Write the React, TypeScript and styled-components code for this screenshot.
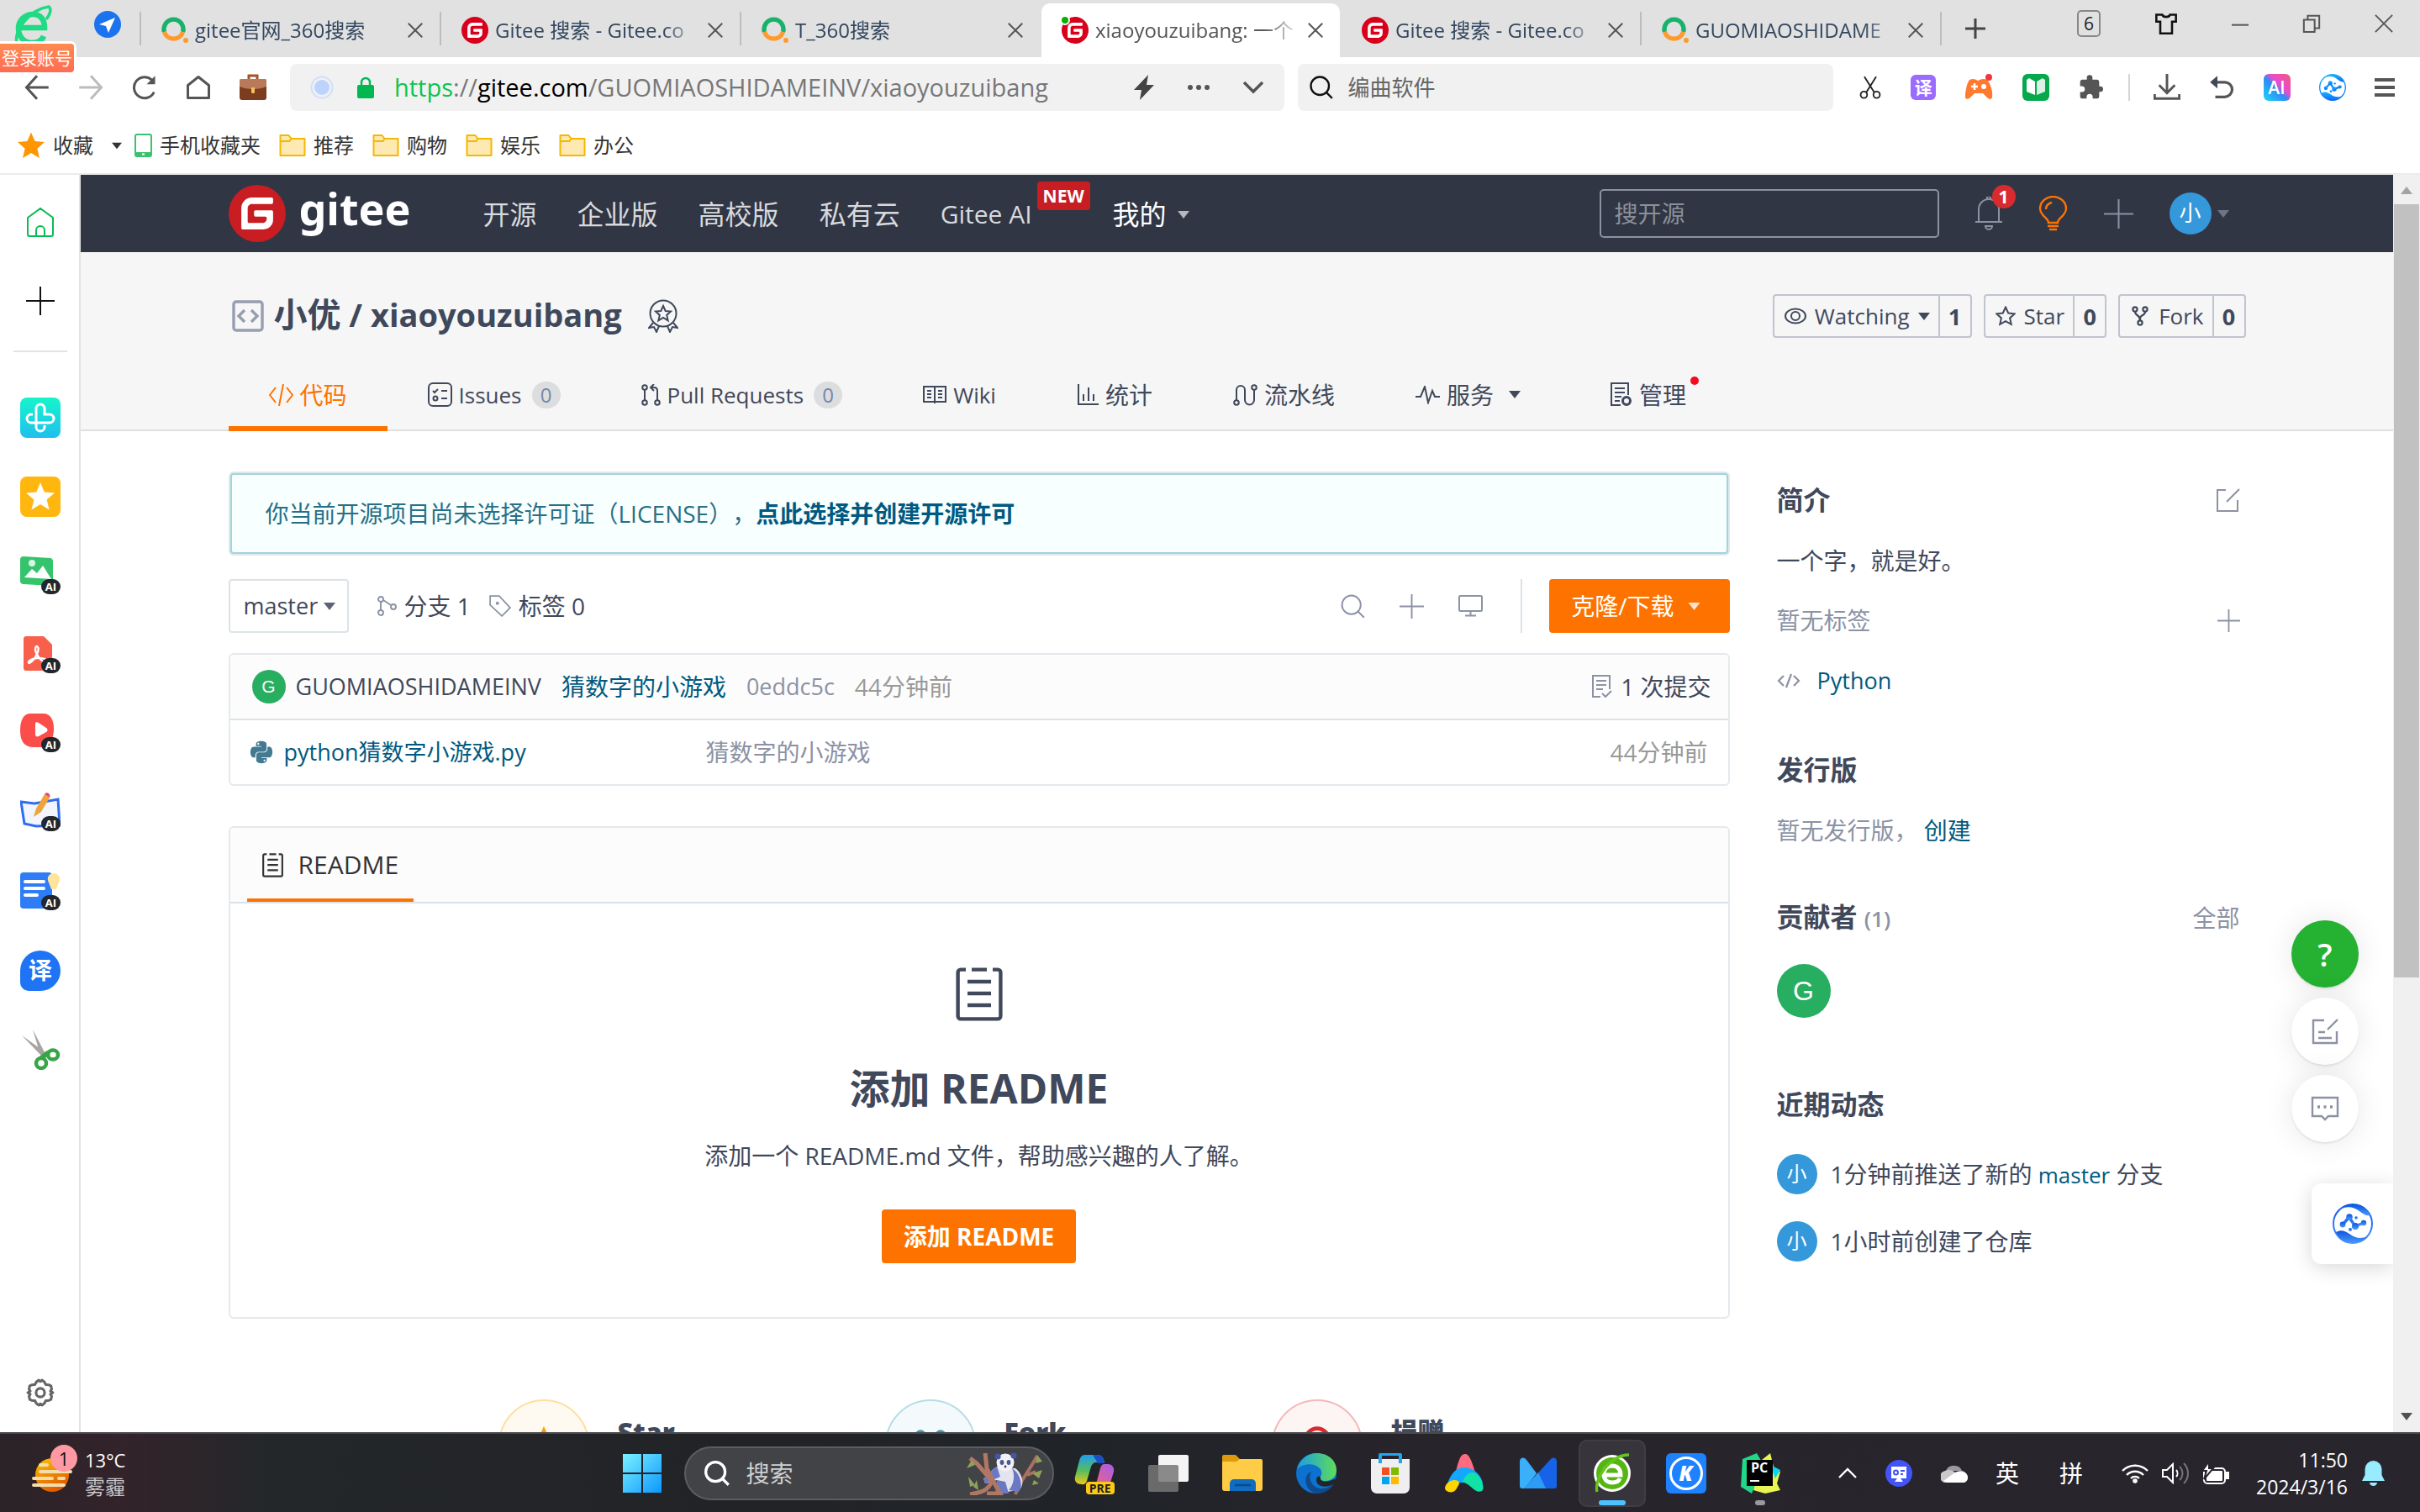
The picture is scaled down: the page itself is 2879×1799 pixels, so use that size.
import React from "react";
import styled, { createGlobalStyle, css } from "styled-components";
import { FaPython } from "react-icons/fa";

const ink = "#40485b";
const muted = "#8c92a4";
const link = "#005980";
const orange = "#fe7300";
const line = "#e3e9ed";
const chrome = "#555555";

const Global = createGlobalStyle`
  *, *::before, *::after { box-sizing: border-box; }
  body { margin: 0; background: #fff; }
  body, button, input, select {
    font-family: "Open Sans", "Noto Sans CJK SC", sans-serif;
    font-size: 28px;
    line-height: 40px;
    color: ${ink};
  }
  button, input, select { border: 0; background: none; padding: 0; margin: 0; outline: 0; }
  a { color: inherit; text-decoration: none; }
  h1, h2, h3, p { margin: 0; }
`;

/* ---------- shared pieces ---------- */

const Drawing = styled.svg<{ $w: number; $h?: number }>`
  width: ${(p) => p.$w}px;
  height: ${(p) => p.$h ?? p.$w}px;
  flex: none;
  display: block;
`;

type IconProps = {
  w: number;
  h?: number;
  box?: string;
  color?: string;
  stroke?: number;
  children: React.ReactNode;
};

const Stroke = ({ w, h, box = "0 0 24 24", color = "currentColor", stroke = 2, children }: IconProps) => (
  <Drawing $w={w} $h={h} viewBox={box} fill="none" stroke={color} strokeWidth={stroke} aria-hidden="true">
    {children}
  </Drawing>
);

const Fill = ({ w, h, box = "0 0 24 24", color = "currentColor", children }: IconProps) => (
  <Drawing $w={w} $h={h} viewBox={box} fill={color} aria-hidden="true">
    {children}
  </Drawing>
);

const Caret = ({ color = ink, w = 14 }: { color?: string; w?: number }) => (
  <Fill w={w} h={9} box="0 0 14 9" color={color}>
    <path d="M0 0h14L7 9z" />
  </Fill>
);

const IconButton = styled.button`
  display: flex;
  align-items: center;
  justify-content: center;
  color: ${chrome};
  flex: none;
`;

const GiteeMark = ({ size, color = "#d9001b" }: { size: number; color?: string }) => (
  <Fill w={size} color={color}>
    <circle cx="12" cy="12" r="11.5" fill="#fff" />
    <path d="M11.984 0A12 12 0 0 0 0 12a12 12 0 0 0 12 12 12 12 0 0 0 12-12A12 12 0 0 0 12 0a12 12 0 0 0-.016 0zm6.09 5.333c.328 0 .593.266.592.593v1.482a.594.594 0 0 1-.593.592H9.777c-.982 0-1.778.796-1.778 1.778v5.63c0 .327.266.592.593.592h5.63c.982 0 1.778-.796 1.778-1.778v-.296a.593.593 0 0 0-.592-.593h-4.15a.592.592 0 0 1-.592-.592v-1.482a.593.593 0 0 1 .593-.592h6.815c.327 0 .593.265.593.592v3.408a4 4 0 0 1-4 4H5.926a.593.593 0 0 1-.593-.593V9.778a4.444 4.444 0 0 1 4.445-4.444h8.296Z" />
  </Fill>
);

const SoMark = () => (
  <Drawing $w={32} viewBox="0 0 32 32" fill="none" aria-hidden="true">
    <path d="M3.5 18a11.5 11.5 0 1 1 22 0" stroke="#19b26b" strokeWidth="5.4" />
    <path d="M3.5 18a11.5 11.5 0 0 0 22 0" stroke="#ff9a2e" strokeWidth="5.4" />
    <circle cx="29" cy="28" r="3" fill="#ff9a2e" />
  </Drawing>
);

const SwirlMark = ({ size, id }: { size: number; id: string }) => (
  <Drawing $w={size} viewBox="0 0 48 48" fill="none" aria-hidden="true">
    <defs>
      <linearGradient id={id} x1="0" y1="0" x2="0" y2="1">
        <stop offset="0" stopColor={id === "swirlTop" ? "#16b4ff" : "#0a56dd"} />
        <stop offset="1" stopColor={id === "swirlTop" ? "#0f6bf5" : "#4b97ff"} />
      </linearGradient>
    </defs>
    <circle cx="24" cy="24" r="23" stroke={`url(#${id})`} strokeWidth="2" />
    <path d="M7 8C18 2 24 4 32 9c5 4 8 6 13 5C41 5 33 1 24 1 16 1 11 4 7 8z" fill={`url(#${id})`} />
    <path d="M4 34c6-3 10-2 16 2 8 6 14 6 22 3-5 6-11 8-18 8-9 0-16-4-20-13z" fill={`url(#${id})`} />
    <path d="M12 25l8-9M20 17l7 10 10-4" stroke={`url(#${id})`} strokeWidth="3.4" strokeLinecap="round" />
    <g fill={`url(#${id})`}>
      <circle cx="12" cy="25" r="3.4" />
      <circle cx="20" cy="16" r="3.8" />
      <circle cx="27" cy="27" r="4" />
      <circle cx="37" cy="23" r="3.2" />
      <circle cx="21" cy="31" r="2" />
      <circle cx="28" cy="17" r="1.8" />
    </g>
  </Drawing>
);

const Plus = ({ w, color, stroke = 1.4 }: { w: number; color?: string; stroke?: number }) => (
  <Stroke w={w} color={color} stroke={stroke}>
    <path d="M12 0v24M0 12h24" />
  </Stroke>
);

const Magnifier = ({ w, color, stroke = 1.8 }: { w: number; color?: string; stroke?: number }) => (
  <Stroke w={w} color={color} stroke={stroke}>
    <circle cx="10.5" cy="10.5" r="9.2" />
    <path d="M17 17l6 6" />
  </Stroke>
);

/* ---------- browser: tabs ---------- */

const Shell = styled.div`
  height: 100vh;
  display: flex;
  flex-direction: column;
  overflow: hidden;
`;

const TabStrip = styled.div`
  height: 68px;
  flex: none;
  display: flex;
  align-items: center;
  background: #e1e1e1;
`;

const Account = styled.div`
  position: relative;
  width: 166px;
  height: 68px;
  flex: none;
  padding: 8px 22px 18px 16px;
  display: flex;
  justify-content: space-between;
  align-items: center;
`;

const LoginBadge = styled.button`
  position: absolute;
  left: 0;
  top: 52px;
  z-index: 2;
  padding: 0 2px;
  border-radius: 0 4px 4px 0;
  box-shadow: 0 0 0 3px #fff;
  background: linear-gradient(#ff8a50, #ff6b52);
  color: #fff;
  font-size: 21px;
  line-height: 34px;
`;

const TabDivider = styled.span<{ $hidden?: boolean }>`
  width: 2px;
  height: 40px;
  flex: none;
  background: ${(p) => (p.$hidden ? "transparent" : "#bdbdbd")};
`;

const Tab = styled.div<{ $active?: boolean }>`
  flex: 0 1 355px;
  min-width: 0;
  height: 64px;
  align-self: flex-end;
  padding: 0 20px 0 24px;
  display: flex;
  align-items: center;
  gap: 8px;
  ${(p) =>
    p.$active &&
    css`
      background: #fff;
      border-radius: 10px 10px 0 0;
    `}
`;

const TabTitle = styled.span<{ $active?: boolean }>`
  flex: 1;
  min-width: 0;
  white-space: nowrap;
  font-size: 24px;
  line-height: 36px;
  color: ${(p) => (p.$active ? "#555" : "#33475f")};
  mask-image: linear-gradient(to right, #000 82%, transparent);
`;

const NewTab = styled(IconButton)`
  padding: 0 28px;
`;

const WindowControls = styled.div`
  margin-left: auto;
  height: 56px;
  align-self: flex-start;
  display: flex;
  align-items: center;
  gap: 64px;
  padding-right: 32px;
`;

const WindowCount = styled.span`
  width: 28px;
  border: 2px solid #888;
  border-radius: 5px;
  font-size: 21px;
  line-height: 28px;
  text-align: center;
  color: #222;
`;

const browserTabs = [
  { icon: "so", title: "gitee官网_360搜索" },
  { icon: "gitee", title: "Gitee 搜索 - Gitee.co" },
  { icon: "so", title: "T_360搜索" },
  { icon: "gitee", title: "xiaoyouzuibang: 一个", active: true },
  { icon: "gitee", title: "Gitee 搜索 - Gitee.co" },
  { icon: "so", title: "GUOMIAOSHIDAME" },
];

const FavWrap = styled.span`
  position: relative;
  flex: none;
`;

const LiveDot = styled.span`
  position: absolute;
  left: -2px;
  top: -2px;
  width: 12px;
  height: 12px;
  border-radius: 50%;
  background: #0cb000;
  border: 2px solid #fff;
`;

const BrowserTabs = () => (
  <TabStrip>
    <Account>
      <Drawing $w={46} viewBox="0 0 46 46" fill="none" aria-hidden="true">
        <path d="M7 27h30c0-10-5-16-14-16S6 18 6 28s7 17 16 17c7 0 12-3 14-8" stroke="#1fdb83" strokeWidth="6.6" />
        <path d="M4 45C0 30 20 5 42 2c4 3 1 10-3 15" stroke="#1fdb83" strokeWidth="3.6" />
      </Drawing>
      <Drawing $w={32} viewBox="0 0 32 32" aria-hidden="true">
        <circle cx="16" cy="16" r="16" fill="#1b74ee" />
        <path d="M25 8L6 16l8 2 3 8z" fill="#fff" />
      </Drawing>
      <LoginBadge>登录账号</LoginBadge>
    </Account>
    <TabDivider />
    {browserTabs.map((t, i) => (
      <React.Fragment key={i}>
        <Tab $active={t.active}>
          <FavWrap>
            {t.icon === "so" ? <SoMark /> : <GiteeMark size={32} />}
            {t.active && <LiveDot />}
          </FavWrap>
          <TabTitle $active={t.active}>{t.title}</TabTitle>
          <IconButton aria-label="关闭标签">
            <Stroke w={18} stroke={2.6}>
              <path d="M1 1l22 22M23 1L1 23" />
            </Stroke>
          </IconButton>
        </Tab>
        <TabDivider $hidden={i === 2 || i === 3} />
      </React.Fragment>
    ))}
    <NewTab aria-label="新建标签">
      <Plus w={24} color="#444" stroke={3} />
    </NewTab>
    <WindowControls>
      <WindowCount>6</WindowCount>
      <Stroke w={28} color="#111" stroke={2.2}>
        <path d="M2 3h6c1 3 7 3 8 0h6v7h-4v12H6V10H2z" />
      </Stroke>
      <IconButton aria-label="最小化">
        <Stroke w={20} color="#555" stroke={2.4}>
          <path d="M0 14h24" />
        </Stroke>
      </IconButton>
      <IconButton aria-label="还原">
        <Stroke w={22} color="#555" stroke={2.2}>
          <path d="M2 7h14v16H2zM7 7V2h15v16h-6" />
        </Stroke>
      </IconButton>
      <IconButton aria-label="关闭">
        <Stroke w={22} color="#555" stroke={2}>
          <path d="M1 1l22 22M23 1L1 23" />
        </Stroke>
      </IconButton>
    </WindowControls>
  </TabStrip>
);

/* ---------- browser: address row ---------- */

const AddressRow = styled.div`
  height: 72px;
  flex: none;
  display: flex;
  align-items: center;
  padding: 0 30px 0 29px;
`;

const NavButtons = styled.div`
  width: 316px;
  flex: none;
  display: flex;
  align-items: center;
  gap: 34px;
`;

const AddressField = styled.div`
  flex: 1184 1 0;
  min-width: 0;
  height: 56px;
  display: flex;
  align-items: center;
  border-radius: 8px;
  background: #f1f1f1;
  padding: 0 24px;
`;

const FieldIcons = styled.div`
  width: 100px;
  flex: none;
  display: flex;
  align-items: center;
  gap: 28px;
`;

const Url = styled.div`
  flex: 1;
  min-width: 0;
  overflow: hidden;
  white-space: nowrap;
  font-size: 29px;
  color: #777;
  outline: 0;

  i { font-style: normal; color: #0cc44f; }
  b { font-weight: 400; color: #000; }
`;

const FieldActions = styled.div`
  display: flex;
  align-items: center;
  gap: 38px;
`;

const SearchField = styled.label`
  flex: 636 1 0;
  margin-left: 16px;
  height: 56px;
  display: flex;
  align-items: center;
  gap: 18px;
  padding: 0 14px;
  border-radius: 8px;
  background: #f1f1f1;
  color: #111;
`;

const SearchInput = styled.input`
  flex: 1;
  min-width: 0;
  font-size: 26px;

  &::placeholder { color: #666; opacity: 1; }
`;

const Extensions = styled.div`
  margin-left: 30px;
  display: flex;
  align-items: center;
  justify-content: space-between;
  width: 638px;
  flex: none;
`;

const Divider = styled.span`
  width: 2px;
  height: 32px;
  margin: 0 -6px;
  background: #d5d5d5;
`;

const TileIcon = styled.span<{ $bg: string; $size?: number }>`
  width: ${(p) => p.$size ?? 32}px;
  height: ${(p) => p.$size ?? 32}px;
  flex: none;
  border-radius: 6px;
  background: ${(p) => p.$bg};
  color: #fff;
  display: flex;
  align-items: center;
  justify-content: center;
  font-size: 21px;
  font-weight: 600;
  line-height: 28px;
`;

const AddressBar = () => (
  <AddressRow>
    <NavButtons>
      <IconButton aria-label="后退">
        <Stroke w={30} stroke={2.4}>
          <path d="M23 12H2M12 1L2 12l10 11" />
        </Stroke>
      </IconButton>
      <IconButton aria-label="前进">
        <Stroke w={30} color="#bcbcbc" stroke={2.4}>
          <path d="M1 12h21M12 1l10 11-10 11" />
        </Stroke>
      </IconButton>
      <IconButton aria-label="刷新">
        <Stroke w={30} stroke={2.4}>
          <path d="M21 16.500A10 10 0 1 1 19 5" />
          <path d="M22 1v8h-8z" fill="currentColor" stroke="none" />
        </Stroke>
      </IconButton>
      <IconButton aria-label="主页">
        <Stroke w={30} stroke={2.4}>
          <path d="M2 10l10-8 10 8v12H2z" strokeLinejoin="round" />
        </Stroke>
      </IconButton>
      <Drawing $w={32} viewBox="0 0 32 32" aria-hidden="true">
        <path d="M11 6V2h10v4" fill="none" stroke="#a5532b" strokeWidth="3" />
        <rect y="6" width="32" height="25" rx="3" fill="#7c3c1e" />
        <path d="M0 8c0-2 1-2 3-2h26c2 0 3 0 3 2v7c-9 4-23 4-32 0z" fill="#b97a5a" />
        <rect x="14" y="16" width="4" height="7" rx="1" fill="#f0c25a" />
      </Drawing>
    </NavButtons>
    <AddressField>
      <FieldIcons>
        <Drawing $w={28} viewBox="0 0 28 28" fill="none" aria-hidden="true">
          <circle cx="14" cy="14" r="12.500" stroke="#cfdffb" strokeWidth="2" />
          <circle cx="14" cy="14" r="9" fill="#bcd3fd" />
        </Drawing>
        <Drawing $w={20} $h={26} viewBox="0 0 20 26" fill="none" aria-hidden="true">
          <path d="M5 11V7a5 5 0 0 1 10 0v4" stroke="#00b84f" strokeWidth="2.400" />
          <rect y="10" width="20" height="16" rx="2" fill="#00b84f" />
        </Drawing>
      </FieldIcons>
      <Url role="textbox" aria-label="地址栏">
        <i>https</i>://<b>gitee.com</b>/GUOMIAOSHIDAMEINV/xiaoyouzuibang
      </Url>
      <FieldActions>
        <Fill w={26} h={30} box="0 0 26 30" color="#444">
          <path d="M18 0L1 18h9L8 30l17-18h-9z" />
        </Fill>
        <Fill w={28} h={8} box="0 0 28 8" color={chrome}>
          <circle cx="4" cy="4" r="3" />
          <circle cx="14" cy="4" r="3" />
          <circle cx="24" cy="4" r="3" />
        </Fill>
        <Stroke w={26} h={16} box="0 0 26 16" color={chrome} stroke={3.4}>
          <path d="M2 2l11 11L24 2" />
        </Stroke>
      </FieldActions>
    </AddressField>
    <SearchField>
      <Magnifier w={28} stroke={2} />
      <SearchInput placeholder="编曲软件" aria-label="编曲软件" />
    </SearchField>
    <Extensions>
      <Stroke w={28} color="#222" stroke={1.6}>
        <path d="M6 1l10 16M18 1L8 17" />
        <circle cx="5.500" cy="19.500" r="3.300" />
        <circle cx="18.500" cy="19.500" r="3.300" />
      </Stroke>
      <TileIcon $bg="#9a6bff" $size={30}>译</TileIcon>
      <Drawing $w={34} viewBox="0 0 34 34" aria-hidden="true">
        <path d="M6 8c4-2 7-1 10 1 4-2 8-3 12 0 4 6 6 14 5 20-1 3-4 2-6 0l-5-5H12l-5 5c-2 2-6 3-6-1C1 21 3 12 6 8z" fill="#ff7a2e" />
        <path d="M8 16h8M12 12v8" stroke="#fff" strokeWidth="2.500" />
        <circle cx="23" cy="16" r="3" fill="#fff" />
        <circle cx="29" cy="5" r="4" fill="#f4353f" />
      </Drawing>
      <TileIcon $bg="#05a94c">
        <Fill w={24} color="#fff">
          <path d="M1 3l3-2 7 4v16l-10-4z" />
          <path d="M23 3l-3-2-7 4v16l10-4z" opacity=".85" />
        </Fill>
      </TileIcon>
      <Fill w={32} color={chrome}>
        <path d="M20 11h-1V7c0-1.100-.9-2-2-2h-4V3.500a2.500 2.500 0 0 0-5 0V5H4c-1.100 0-2 .9-2 2v3.800h1.500a2.700 2.700 0 0 1 0 5.400H2V20c0 1.100.9 2 2 2h3.800v-1.500a2.700 2.700 0 0 1 5.400 0V22H17c1.100 0 2-.9 2-2v-4h1a2.500 2.500 0 0 0 0-5z" />
      </Fill>
      <Divider />
      <Stroke w={32} color={chrome} stroke={2.2}>
        <path d="M12 0v17M5 10l7 7 7-7M1 18v4h22v-4" />
      </Stroke>
      <Stroke w={30} color={chrome} stroke={2.6}>
        <path d="M3 7h12a7 7 0 0 1 0 14H6" />
        <path d="M8 1v12L1 7z" fill="currentColor" stroke="none" />
      </Stroke>
      <TileIcon $bg="linear-gradient(45deg, #19d8f5, #2f8cf7 45%, #e94bd0 60%, #f05a7a)">AI</TileIcon>
      <SwirlMark size={32} id="swirlTop" />
      <IconButton aria-label="菜单">
        <Stroke w={24} stroke={4}>
          <path d="M0 3h24M0 12h24M0 21h24" />
        </Stroke>
      </IconButton>
    </Extensions>
  </AddressRow>
);

/* ---------- browser: bookmarks ---------- */

const BookmarkRow = styled.nav`
  height: 68px;
  flex: none;
  display: flex;
  align-items: center;
  gap: 15px;
  padding-left: 20px;
  border-bottom: 2px solid #ececec;
`;

const Bookmark = styled.a`
  display: flex;
  align-items: center;
  gap: 9px;
  margin-right: 7px;
  font-size: 24px;
  line-height: 36px;
  color: #333;
`;

const Folder = () => (
  <Drawing $w={32} $h={28} viewBox="0 0 31 28" aria-hidden="true">
    <path d="M1 26V2h10l3 4h16v20z" fill="#ffe9b3" stroke="#f5b800" strokeWidth="2" strokeLinejoin="round" />
    <path d="M1 9h11l2-3" stroke="#f5b800" strokeWidth="2" fill="none" />
  </Drawing>
);

const Bookmarks = () => (
  <BookmarkRow aria-label="收藏栏">
    <Bookmark href="#">
      <Fill w={34} color="#ff9500">
        <path d="M12 1l3.200 7.500 8.100.7-6.100 5.400 1.800 8L12 18.400 5 22.600l1.800-8L.7 9.200l8.100-.7z" />
      </Fill>
      收藏
    </Bookmark>
    <Fill w={12} h={9} box="0 0 14 9" color="#333">
      <path d="M0 0h14L7 9z" />
    </Fill>
    <Bookmark href="#">
      <Drawing $w={21} $h={28} viewBox="0 0 21 28" aria-hidden="true">
        <rect x="1" y="1" width="19" height="26" rx="2" fill="#fff" stroke="#3cc26e" strokeWidth="2" />
        <path d="M1 22h19v5H1z" fill="#3cc26e" />
        <path d="M9 24.500h3" stroke="#fff" strokeWidth="2" />
      </Drawing>
      手机收藏夹
    </Bookmark>
    {["推荐", "购物", "娱乐", "办公"].map((name) => (
      <Bookmark href="#" key={name}>
        <Folder />
        {name}
      </Bookmark>
    ))}
  </BookmarkRow>
);

/* ---------- browser: side rail ---------- */

const Body = styled.div`
  flex: 1;
  min-height: 0;
  display: flex;
`;

const Rail = styled.aside`
  width: 96px;
  flex: none;
  border-right: 2px solid #e3e3e3;
  padding: 9px 0 0 2px;
  display: flex;
  flex-direction: column;
`;

const RailItem = styled.button<{ $last?: boolean }>`
  height: 94px;
  flex: none;
  display: flex;
  align-items: center;
  justify-content: center;
  margin-top: ${(p) => (p.$last ? "auto" : "0")};
`;

const RailRule = styled.hr`
  width: 64px;
  height: 2px;
  flex: none;
  margin: 12px auto 31px;
  border: 0;
  background: #e3e3e3;
`;

const AiWrap = styled.span`
  position: relative;
  width: 48px;
  height: 48px;
`;

const AiTag = styled.span`
  position: absolute;
  right: 0;
  bottom: 2px;
  width: 23px;
  height: 18px;
  border-radius: 9px;
  background: #23262d;
  color: #fff;
  font-size: 13px;
  font-weight: 700;
  line-height: 18px;
  text-align: center;
`;

const TranslateWrap = styled.span`
  width: 48px;
  height: 48px;
  border-radius: 50% 50% 50% 10px;
  background: #1f74f5;
  color: #fff;
  font-size: 28px;
  font-weight: 700;
  line-height: 46px;
`;

const WithAi = ({ children }: { children: React.ReactNode }) => (
  <AiWrap>
    <Drawing $w={48} viewBox="0 0 48 48" fill="none" aria-hidden="true">
      {children}
    </Drawing>
    <AiTag>AI</AiTag>
  </AiWrap>
);

const SideRail = () => (
  <Rail>
    <RailItem aria-label="首页">
      <Stroke w={34} h={36} box="0 0 34 36" color="#0bbb55">
        <path d="M2 13L17 2l15 11v20a2 2 0 0 1-2 2H4a2 2 0 0 1-2-2z" />
        <path d="M12 35V28a5 5 0 0 1 10 0v7" />
      </Stroke>
    </RailItem>
    <RailItem aria-label="添加">
      <Plus w={34} color="#111" />
    </RailItem>
    <RailRule />
    <RailItem aria-label="健康">
      <Drawing $w={48} viewBox="0 0 48 48" fill="none" aria-hidden="true">
        <defs>
          <linearGradient id="health" x1="0" y1="0" x2="0" y2="1">
            <stop offset="0" stopColor="#16f5cb" />
            <stop offset="1" stopColor="#1fbfee" />
          </linearGradient>
        </defs>
        <rect width="48" height="48" rx="8" fill="url(#health)" />
        <path
          d="M19 29V13a5 5 0 0 1 10 0v7h6a5 5 0 0 1 0 10H13a5 5 0 0 1 0-10h2M29 33v2a5 5 0 0 1-10 0v-6"
          stroke="#fff"
          strokeWidth="3"
        />
      </Drawing>
    </RailItem>
    <RailItem aria-label="收藏">
      <Drawing $w={48} viewBox="0 0 48 48" aria-hidden="true">
        <rect width="48" height="48" rx="8" fill="#ffb60f" />
        <path d="M24 7l4.700 11.500 12.300 1-9.400 8 3 12L24 33l-10.600 6.500 3-12-9.400-8 12.300-1z" fill="#fff" />
      </Drawing>
    </RailItem>
    <RailItem aria-label="AI图片">
      <WithAi>
        <path d="M4 1l32 2a4 4 0 0 1 3 4v26a3 3 0 0 1-3 3L4 34a4 4 0 0 1-4-4V5a4 4 0 0 1 4-4z" fill="#35c46c" />
        <circle cx="14" cy="9" r="4" fill="#d9f5e3" />
        <path d="M5 26l9-10 6 5 7-9 10 16z" fill="#fff" />
      </WithAi>
    </RailItem>
    <RailItem aria-label="AI文档">
      <WithAi>
        <path d="M6 2h22l10 10v31H7a3 3 0 0 1-3-3V4z" fill="#f9604c" />
        <path d="M20 14c5 3-3 17-9 20-3 0 0-5 9-6s13 3 11 5c-4 1-12-8-13-15 0-3 1-4 2-4z" stroke="#fff" strokeWidth="2.400" />
      </WithAi>
    </RailItem>
    <RailItem aria-label="AI视频">
      <WithAi>
        <path d="M12 0h16c8 0 12 8 12 18s-4 22-14 22H16C4 40 0 32 0 20S4 0 12 0z" fill="#fb4d4a" />
        <path d="M18 12c0-2 2-2 4-1l9 6c2 1 2 4 0 5l-9 5c-2 1-4 0-4-2z" fill="#fff" />
      </WithAi>
    </RailItem>
    <RailItem aria-label="AI写作">
      <WithAi>
        <path d="M1 11l16 2 28-5 2 31-28 1L5 37z" fill="#f2f5ff" stroke="#2f6cf0" strokeWidth="3" />
        <path d="M16 29l3-10L29 2l6 4-10 17z" fill="#eea43a" />
        <path d="M29 2c2-4 8-1 6 4z" fill="#e9486d" />
      </WithAi>
    </RailItem>
    <RailItem aria-label="AI笔记">
      <WithAi>
        <rect y="1" width="38" height="43" rx="4" fill="#2f7df6" />
        <path d="M6 12h22M6 20h22M6 28h14" stroke="#fff" strokeWidth="4" strokeLinecap="round" />
        <path d="M40 2c6 0 9 6 6 11l-3 8h-6l-3-8C31 8 34 2 40 2z" fill="#ffe49b" />
      </WithAi>
    </RailItem>
    <RailItem aria-label="翻译">
      <TranslateWrap>译</TranslateWrap>
    </RailItem>
    <RailItem aria-label="截图">
      <Drawing $w={48} viewBox="0 0 48 48" fill="none" aria-hidden="true">
        <path d="M2 7l28 20-4 5zM15 0l14 27-5 3z" fill="#a7a4a2" />
        <ellipse cx="25" cy="40" rx="6" ry="6" stroke="#37a544" strokeWidth="4.500" />
        <ellipse cx="39" cy="30" rx="6" ry="5.500" stroke="#37a544" strokeWidth="4.500" />
        <path d="M25 34l9-7" stroke="#37a544" strokeWidth="6" />
      </Drawing>
    </RailItem>
    <RailItem $last aria-label="设置">
      <Stroke w={34} color="#666" stroke={2.2}>
        <path d="M8.500 3.200L10.500 1.500 12 2.600l1.500-1.100 2 1.700 1 2 2.800.3 1.600.8.600 2.700-1 1.700L22.500 12l-2 1.300 1 1.700-.6 2.700-1.600.8-2.800.3-1 2-2 1.700L12 21.400l-1.500 1.100-2-1.700-1-2-2.800-.3-1.600-.8-.6-2.700 1-1.700L1.500 12l2-1.300-1-1.700.6-2.700 1.600-.8 2.800-.3z" strokeLinejoin="round" />
        <circle cx="12" cy="12" r="3.600" />
      </Stroke>
    </RailItem>
  </Rail>
);

/* ---------- page scroll bar ---------- */

const ScrollTrack = styled.div`
  width: 32px;
  flex: none;
  background: #f0f0f0;
  display: flex;
  flex-direction: column;
  align-items: center;
  padding: 14px 0;
`;

const ScrollThumb = styled.div`
  width: 30px;
  height: 920px;
  margin: 12px 0 auto;
  background: #c1c1c1;
`;

const ScrollBar = () => (
  <ScrollTrack aria-hidden="true">
    <Fill w={16} h={9} box="0 0 14 9" color="#a3a3a3">
      <path d="M0 9h14L7 0z" />
    </Fill>
    <ScrollThumb />
    <Caret w={16} color="#505050" />
  </ScrollTrack>
);

/* ---------- gitee: site header ---------- */

const Page = styled.div`
  position: relative;
  flex: 1;
  min-width: 0;
  overflow: hidden;
`;

const Container = styled.div`
  max-width: 2400px;
  margin: 0 auto;
`;

const SiteHeader = styled.header`
  background: #313644;
`;

const SiteBar = styled(Container)`
  height: 92px;
  display: flex;
  align-items: center;
  padding-right: 20px;
`;

const Brand = styled.a`
  display: flex;
  align-items: center;
  gap: 16px;
  color: #fff;
`;

const BrandName = styled.span`
  padding-bottom: 12px;
  font-family: "Noto Sans", sans-serif;
  font-size: 52px;
  font-weight: 700;
  line-height: 80px;
`;

const SiteNav = styled.nav`
  display: flex;
  align-items: center;
  gap: 48px;
  margin-left: 86px;
  padding-top: 2px;
  font-size: 32px;
  line-height: 48px;
  color: #d8d9dc;
`;

const SiteLink = styled.a<{ $bright?: boolean; $wide?: boolean }>`
  position: relative;
  display: flex;
  align-items: center;
  gap: 12px;
  ${(p) => p.$bright && "color: #fff;"}
  ${(p) => p.$wide && "margin-right: 48px; font-size: 30px;"}
`;

const NewBadge = styled.span`
  position: absolute;
  left: calc(100% + 6px);
  top: -15px;
  padding: 0 7px;
  border-radius: 4px;
  background: #c71d23;
  color: #fff;
  font-size: 21px;
  font-weight: 700;
  line-height: 34px;
`;

const SiteTools = styled.div`
  margin-left: auto;
  display: flex;
  align-items: center;
  gap: 43px;
`;

const SiteSearch = styled.input`
  width: 404px;
  height: 58px;
  padding: 0 16px;
  border: 2px solid #8c92a4;
  border-radius: 5px;
  color: #fff;

  &::placeholder { color: #8c8f98; opacity: 1; }
`;

const BellButton = styled(IconButton)`
  position: relative;
  color: ${muted};
`;

const BellCount = styled.span`
  position: absolute;
  left: 20px;
  top: -14px;
  width: 28px;
  border-radius: 50%;
  background: #d82b2f;
  color: #fff;
  font-size: 21px;
  font-weight: 700;
  line-height: 28px;
`;

const Avatar = styled.span<{ $size: number; $bg: string; $font: number }>`
  width: ${(p) => p.$size}px;
  height: ${(p) => p.$size}px;
  flex: none;
  border-radius: 50%;
  background: ${(p) => p.$bg};
  color: #fff;
  font-family: "Liberation Sans", "Noto Sans CJK SC", sans-serif;
  font-size: ${(p) => p.$font}px;
  line-height: ${(p) => p.$size}px;
  text-align: center;
`;

const UserMenu = styled.button`
  display: flex;
  align-items: center;
  gap: 7px;
`;

const Header = () => (
  <SiteHeader>
    <SiteBar>
      <Brand href="#">
        <GiteeMark size={68} color="#c71d23" />
        <BrandName>gitee</BrandName>
      </Brand>
      <SiteNav>
        <SiteLink href="#">开源</SiteLink>
        <SiteLink href="#">企业版</SiteLink>
        <SiteLink href="#">高校版</SiteLink>
        <SiteLink href="#">私有云</SiteLink>
        <SiteLink href="#" $wide>
          Gitee AI
          <NewBadge>NEW</NewBadge>
        </SiteLink>
        <SiteLink href="#" $bright>
          我的
          <Caret w={16} color="#b5b7bd" />
        </SiteLink>
      </SiteNav>
      <SiteTools>
        <SiteSearch placeholder="搜开源" aria-label="搜开源" />
        <BellButton aria-label="通知">
          <Stroke w={32} h={40} box="0 0 32 40">
            <path d="M0 30h32M4 30V15a12 12 0 0 1 24 0v15M14 3V0h4v3M12 35a4 4 0 0 0 8 0z" />
          </Stroke>
          <BellCount>1</BellCount>
        </BellButton>
        <IconButton aria-label="灵感">
          <Stroke w={35} h={42} box="0 0 35 42" color={orange} stroke={2.4}>
            <path d="M12 32c0-6-10-8-10-17a15.500 14 0 0 1 31 0c0 9-10 11-10 17zM9 16c0-4 3-7 7-8M11 36h13M13 40h9" />
          </Stroke>
        </IconButton>
        <IconButton aria-label="新建">
          <Plus w={35} color={muted} />
        </IconButton>
        <UserMenu aria-label="用户菜单">
          <Avatar $size={50} $bg="#3498db" $font={26}>小</Avatar>
          <Caret color="#6f7587" />
        </UserMenu>
      </SiteTools>
    </SiteBar>
  </SiteHeader>
);

/* ---------- gitee: repository header ---------- */

const RepoHeader = styled.section`
  background: #f6f6f6;
  box-shadow: inset 0 -2px #dfdfdf;
  padding-top: 50px;
`;

const TitleRow = styled.div`
  display: flex;
  align-items: center;
  height: 52px;
`;

const RepoTitle = styled.h1`
  font-size: 38px;
  font-weight: 700;
  line-height: 48px;
  margin: 0 31px 4px 12px;
`;

const OwnerLink = styled.a`
  font-size: 40px;
`;

const CodeBox = styled.span`
  padding-left: 4px;
`;

const RepoActions = styled.div`
  margin-left: auto;
  display: flex;
  gap: 14px;
`;

const SplitButton = styled.div`
  height: 52px;
  display: flex;
  border: 2px solid #c0c4cf;
  border-radius: 4px;
  font-size: 27px;
`;

const SplitMain = styled.button`
  display: flex;
  align-items: center;
  gap: 10px;
  padding: 0 10px 0 12px;
  font-size: 26px;
`;

const SplitCount = styled.a`
  width: 38px;
  border-left: 2px solid #c0c4cf;
  font-weight: 700;
  line-height: 50px;
  text-align: center;
`;

const RepoTabs = styled.nav`
  display: flex;
  height: 87px;
  margin-top: 24px;
`;

const RepoTab = styled.a<{ $active?: boolean }>`
  position: relative;
  display: flex;
  align-items: center;
  gap: 8px;
  padding: 0 48px;
  ${(p) =>
    p.$active &&
    css`
      color: ${orange};
      box-shadow: inset 0 -6px ${orange};
    `}
`;

const CountPill = styled.span`
  min-width: 34px;
  margin-left: 4px;
  border-radius: 16px;
  background: #dcdddf;
  color: #7587ab;
  font-size: 24px;
  line-height: 32px;
  text-align: center;
`;

const RedDot = styled.span`
  position: absolute;
  right: 33px;
  top: 22px;
  width: 10px;
  height: 10px;
  border-radius: 50%;
  background: #f5091f;
`;

const CaretSpace = styled.span`
  margin: 0 8px;
`;

const Latin = styled.span`
  font-size: 27px;
`;

const TabLatin = styled.span`
  font-size: 26px;
`;

const DocLines = ({ w, h, color, stroke = 2 }: { w: number; h: number; color?: string; stroke?: number }) => (
  <Stroke w={w} h={h} box="0 0 28 32" color={color} stroke={stroke}>
    <path d="M6 1.300H3a1.700 1.700 0 0 0-1.700 1.700v26A1.700 1.700 0 0 0 3 30.700h22a1.700 1.700 0 0 0 1.700-1.700V3A1.700 1.700 0 0 0 25 1.300h-3M9.500 1.300h9M7 8.500h14M7 15.500h14M7 22.500h14" />
  </Stroke>
);

const Repo = () => (
  <RepoHeader>
    <Container>
      <TitleRow>
        <CodeBox>
          <Stroke w={38} box="0 0 38 38" color="#979eb0" stroke={3.4}>
            <rect x="2" y="2" width="34" height="34" rx="3" />
            <path d="M15 12l-7 7 7 7M23 12l7 7-7 7" />
          </Stroke>
        </CodeBox>
        <RepoTitle>
          <OwnerLink href="#">小优</OwnerLink> / <a href="#">xiaoyouzuibang</a>
        </RepoTitle>
        <Stroke w={36} h={40} box="0 0 36 40">
          <circle cx="18" cy="17" r="15.500" />
          <path d="M18 8l2.700 6 6.300.6-4.800 4.300 1.500 6.500L18 22l-5.700 3.400 1.500-6.500L9 14.600l6.300-.6z" />
          <path d="M6 28l-5 6 6-1 3 6 3-7M30 28l5 6-6-1-3 6-3-7" />
        </Stroke>
        <RepoActions>
          <SplitButton>
            <SplitMain>
              <Stroke w={26} h={20} box="0 0 26 20">
                <ellipse cx="13" cy="10" rx="12" ry="8.500" />
                <circle cx="13" cy="10" r="5" />
              </Stroke>
              Watching
              <Caret />
            </SplitMain>
            <SplitCount href="#">1</SplitCount>
          </SplitButton>
          <SplitButton>
            <SplitMain>
              <Stroke w={24} stroke={2}>
                <path d="M12 1.500l3.200 7 7.500.8-5.600 5.100 1.600 7.500L12 18.100l-6.700 3.800 1.600-7.500L1.300 9.300l7.500-.8z" />
              </Stroke>
              Star
            </SplitMain>
            <SplitCount href="#">0</SplitCount>
          </SplitButton>
          <SplitButton>
            <SplitMain>
              <Stroke w={24} stroke={2.2}>
                <circle cx="6" cy="4" r="2.600" />
                <circle cx="18" cy="4" r="2.600" />
                <circle cx="12" cy="20" r="2.600" />
                <path d="M6 7c0 5 6 3 6 10M18 7c0 5-6 3-6 8" />
              </Stroke>
              Fork
            </SplitMain>
            <SplitCount href="#">0</SplitCount>
          </SplitButton>
        </RepoActions>
      </TitleRow>
      <RepoTabs>
        <RepoTab href="#" $active>
          <Stroke w={29} h={26} box="0 0 29 26">
            <path d="M8 4l-7 9 7 9M21 4l7 9-7 9M17 0l-5 26" />
          </Stroke>
          代码
        </RepoTab>
        <RepoTab href="#">
          <Stroke w={29} box="0 0 29 29">
            <rect x="1" y="1" width="27" height="27" rx="5" />
            <path d="M6 10l2 2 4-4M16 10h7M16 19h7" />
            <circle cx="9" cy="19" r="2.500" />
          </Stroke>
          <TabLatin>Issues</TabLatin>
          <CountPill>0</CountPill>
        </RepoTab>
        <RepoTab href="#">
          <Stroke w={23} h={26} box="0 0 23 26">
            <circle cx="4" cy="4" r="2.800" />
            <circle cx="4" cy="22" r="2.800" />
            <circle cx="19" cy="22" r="2.800" />
            <path d="M4 7v12M19 19V8c0-3-1-4-4-4h-3M15 0l-4 4 4 4" />
          </Stroke>
          <TabLatin>Pull Requests</TabLatin>
          <CountPill>0</CountPill>
        </RepoTab>
        <RepoTab href="#">
          <Stroke w={28} h={22} box="0 0 28 22">
            <path d="M1 1h26v18H1zM14 1v20M5 6h5M5 10h5M5 14h5M18 6h5M18 10h5M18 14h5" />
          </Stroke>
          <TabLatin>Wiki</TabLatin>
        </RepoTab>
        <RepoTab href="#">
          <Stroke w={26} box="0 0 26 26">
            <path d="M2 0v24h24M8 20v-8M14 20V4M20 20v-8" />
          </Stroke>
          统计
        </RepoTab>
        <RepoTab href="#">
          <Stroke w={29} h={26} box="0 0 29 26">
            <circle cx="4" cy="22" r="2.800" />
            <circle cx="25" cy="4" r="2.800" />
            <path d="M4 19V7a5 5 0 0 1 10 0v12a5 5 0 0 0 11 0V7" />
          </Stroke>
          流水线
        </RepoTab>
        <RepoTab href="#">
          <Stroke w={29} h={22} box="0 0 29 22">
            <path d="M0 13h6L11 1l4 19 5-14 3 7h6" />
          </Stroke>
          服务
          <CaretSpace>
            <Caret w={18} />
          </CaretSpace>
        </RepoTab>
        <RepoTab href="#">
          <Stroke w={27} h={29} box="0 0 27 29">
            <path d="M13 27H2V1h20v14M6 7h12M6 12h12M6 17h8M6 22h6" />
            <circle cx="20" cy="22" r="4.500" strokeWidth="3" />
          </Stroke>
          管理
          <RedDot />
        </RepoTab>
      </RepoTabs>
    </Container>
  </RepoHeader>
);

/* ---------- gitee: main column ---------- */

const Columns = styled(Container)`
  display: flex;
  gap: 56px;
  padding-top: 48px;
`;

const Main = styled.main`
  flex: 1;
  min-width: 0;
`;

const Notice = styled.p`
  margin: 2px;
  padding: 26px 40px;
  border: 2px solid #a3d4db;
  border-radius: 4px;
  box-shadow: 0 0 0 2px #e0e8ec;
  background: #f7ffff;
  color: #276f86;
  text-spacing-trim: space-all;

  a { color: ${link}; font-weight: 700; }
`;

const Toolbar = styled.div`
  display: flex;
  align-items: center;
  height: 64px;
  margin: 30px 0 24px;
`;

const BranchPicker = styled.label`
  height: 64px;
  display: flex;
  align-items: center;
  gap: 6px;
  padding: 0 14px 0 16px;
  border: 2px solid #dce3e8;
  border-radius: 4px;
`;

const BranchSelect = styled.select`
  appearance: none;
  font-size: 27px;
`;

const RefLinks = styled.div`
  display: flex;
  gap: 22px;
  margin-left: 33px;
`;

const RefLink = styled.a`
  display: flex;
  align-items: center;
  gap: 9px;
`;

const ToolIcons = styled.div`
  margin-left: auto;
  display: flex;
  align-items: center;
  gap: 41px;
  color: ${muted};

  button { color: inherit; }
`;

const ToolRule = styled.span`
  width: 2px;
  height: 64px;
  margin: 0 32px 0 45px;
  background: #dce3e8;
`;

const Primary = styled.button<{ $bold?: boolean }>`
  height: 64px;
  display: flex;
  align-items: center;
  gap: 15px;
  padding: 0 26px;
  border-radius: 4px;
  background: ${orange};
  color: #fff;
  font-weight: ${(p) => (p.$bold ? 700 : 400)};
`;

const CloneButton = styled(Primary)`
  padding-right: 34px;
`;

const Card = styled.section`
  border: 2px solid ${line};
  border-radius: 6px;
  overflow: hidden;
`;

const CommitBar = styled.div`
  height: 78px;
  display: flex;
  align-items: center;
  gap: 24px;
  padding: 0 20px 0 26px;
  background: #fcfcfc;
  border-bottom: 2px solid #dce3e8;
  color: ${muted};
`;

const Author = styled.a`
  display: flex;
  align-items: center;
  gap: 12px;
  font-size: 27px;
  color: ${ink};
`;

const TealLink = styled.a`
  color: ${link};
`;

const Grey = styled.span`
  color: #999;
`;

const CommitCount = styled.a`
  margin-left: auto;
  display: flex;
  align-items: center;
  gap: 9px;
  color: ${ink};
`;

const FileTable = styled.table`
  width: 100%;
  border-collapse: collapse;

  td { height: 76px; padding: 0; color: ${muted}; }
  td:first-child { width: 566px; padding-left: 22px; }
  td:last-child { text-align: right; padding-right: 24px; color: #999; }
`;

const FileName = styled.a`
  display: flex;
  align-items: center;
  gap: 12px;
  font-size: 27px;
  color: ${link};
`;

const ReadmeCard = styled(Card)`
  margin-top: 48px;
`;

const ReadmeTabs = styled.div`
  height: 90px;
  padding-left: 20px;
  display: flex;
  background: #fcfcfc;
  border-bottom: 2px solid #dce3e8;
`;

const ReadmeTab = styled.button`
  display: flex;
  align-items: center;
  gap: 18px;
  padding: 0 18px 0 18px;
  color: #333;
  font-size: 30px;
  box-shadow: inset 0 -4px ${orange};
`;

const ReadmeEmpty = styled.div`
  display: flex;
  flex-direction: column;
  align-items: center;
  padding: 76px 0 64px;
`;

const EmptyTitle = styled.h2`
  margin: 48px 0 28px;
  font-size: 48px;
  line-height: 64px;
`;

const EmptyText = styled.p`
  margin-bottom: 44px;
`;

const Supports = styled.div`
  display: grid;
  grid-template-columns: repeat(3, 460px);
  margin-top: 96px;
  padding-left: 321px;
`;

const Support = styled.a`
  display: flex;
  gap: 34px;
  font-size: 32px;
  font-weight: 700;
  line-height: 48px;

  strong { margin-top: 15px; }
`;

const Disc = styled.span<{ $line: string; $bg: string }>`
  width: 108px;
  height: 108px;
  flex: none;
  border: 2px solid ${(p) => p.$line};
  border-radius: 50%;
  background: ${(p) => p.$bg};
  display: flex;
  justify-content: center;
  padding-top: 28px;
`;

const MainColumn = () => (
  <Main>
    <Notice>
      你当前开源项目尚未选择许可证（LICENSE），<a href="#">点此选择并创建开源许可</a>
    </Notice>
    <Toolbar>
      <BranchPicker>
        <BranchSelect aria-label="分支">
          <option>master</option>
        </BranchSelect>
        <Caret color="#5b6376" />
      </BranchPicker>
      <RefLinks>
        <RefLink href="#">
          <Stroke w={24} color={muted} stroke={1.9}>
            <circle cx="5" cy="4" r="3" />
            <circle cx="5" cy="20" r="3" />
            <circle cx="20" cy="13" r="3" />
            <path d="M5 7v10M8 5l9 6" />
          </Stroke>
          分支 1
        </RefLink>
        <RefLink href="#">
          <Stroke w={26} color={muted} stroke={1.6}>
            <path d="M1 1h10l12 13-9 9L1 11z" />
            <circle cx="9" cy="9" r="1" />
          </Stroke>
          标签 0
        </RefLink>
      </RefLinks>
      <ToolIcons>
        <IconButton aria-label="搜索文件">
          <Magnifier w={29} stroke={1.6} />
        </IconButton>
        <IconButton aria-label="新建文件">
          <Plus w={29} stroke={1.6} />
        </IconButton>
        <IconButton aria-label="Web IDE">
          <Stroke w={29} h={26} box="0 0 29 26">
            <rect x="1" y="1" width="27" height="18" rx="1.500" />
            <path d="M14.500 19v5M8 24.500h13" />
          </Stroke>
        </IconButton>
      </ToolIcons>
      <ToolRule />
      <CloneButton>
        克隆/下载
        <Caret w={17} color="#ffe3cc" />
      </CloneButton>
    </Toolbar>
    <Card>
      <CommitBar>
        <Author href="#">
          <Avatar $size={40} $bg="#27ae60" $font={21}>G</Avatar>
          GUOMIAOSHIDAMEINV
        </Author>
        <TealLink href="#">猜数字的小游戏</TealLink>
        <Latin>0eddc5c</Latin>
        <Grey>44分钟前</Grey>
        <CommitCount href="#">
          <Stroke w={26} h={28} box="0 0 26 28" color={muted}>
            <path d="M11 26H2V1h20v16M6 7h12M6 12h12M6 17h8M13 22l4 4 7-7" />
          </Stroke>
          1 次提交
        </CommitCount>
      </CommitBar>
      <FileTable>
        <tbody>
          <tr>
            <td>
              <FileName href="#">
                <FaPython size={30} color="#417a91" />
                python猜数字小游戏.py
              </FileName>
            </td>
            <td>猜数字的小游戏</td>
            <td>44分钟前</td>
          </tr>
        </tbody>
      </FileTable>
    </Card>
    <ReadmeCard>
      <ReadmeTabs>
        <ReadmeTab>
          <DocLines w={25} h={29} stroke={2.4} />
          README
        </ReadmeTab>
      </ReadmeTabs>
      <ReadmeEmpty>
        <DocLines w={56} h={64} stroke={2.2} />
        <EmptyTitle>添加 README</EmptyTitle>
        <EmptyText>添加一个 README.md 文件，帮助感兴趣的人了解。</EmptyText>
        <Primary $bold>添加 README</Primary>
      </ReadmeEmpty>
    </ReadmeCard>
    <Supports>
      <Support href="#">
        <Disc $line="#ffdf9f" $bg="#fffaf1">
          <Fill w={44} color="#fe9d00">
            <path d="M12 1l3.200 7.500 8.100.7-6.100 5.400 1.800 8L12 18.400 5 22.600l1.800-8L.7 9.200l8.100-.7z" />
          </Fill>
        </Disc>
        <strong>Star</strong>
      </Support>
      <Support href="#">
        <Disc $line="#b7dde6" $bg="#f4fafc">
          <Fill w={44} color="#3a9ab5">
            <circle cx="5.500" cy="7" r="3.600" />
            <circle cx="18.500" cy="7" r="3.600" />
          </Fill>
        </Disc>
        <strong>Fork</strong>
      </Support>
      <Support href="#">
        <Disc $line="#f4b9b9" $bg="#fdf4f4">
          <Stroke w={44} color="#d82b2f" stroke={2.6}>
            <circle cx="12" cy="10" r="7.500" />
          </Stroke>
        </Disc>
        <strong>捐赠</strong>
      </Support>
    </Supports>
  </Main>
);

/* ---------- gitee: side column ---------- */

const Side = styled.aside`
  width: 558px;
  flex: none;
  padding: 10px 7px 0 0;
  color: ${ink};
`;

const SideHead = styled.div`
  display: flex;
  justify-content: space-between;
  align-items: center;
  height: 48px;
  color: ${muted};

  h2 { font-size: 32px; line-height: 48px; color: ${ink}; }
  small { font-size: 26px; font-weight: 600; color: ${muted}; }
  button { color: inherit; }
`;

const SideBlock = styled.section<{ $gap?: number }>`
  margin-top: ${(p) => p.$gap ?? 0}px;
`;

const SideRow = styled.div<{ $muted?: boolean; $top?: number }>`
  display: flex;
  align-items: center;
  margin-top: ${(p) => p.$top ?? 28}px;
  color: ${(p) => (p.$muted ? muted : ink)};

  > :last-child:is(button) { margin-left: auto; color: ${muted}; }
`;

const PyRow = styled(SideRow)`
  gap: 20px;
`;

const Feed = styled.ul`
  list-style: none;
  margin: 35px 0 0;
  padding: 0;
  display: grid;
  gap: 32px;
`;

const FeedItem = styled.li`
  display: flex;
  align-items: center;
  gap: 16px;
`;

const SideColumn = () => (
  <Side>
    <SideBlock>
      <SideHead>
        <h2>简介</h2>
        <IconButton aria-label="编辑简介">
          <Stroke w={28} box="0 0 28 28">
            <path d="M11 2H1v25h24V14M27 1L12 16" />
          </Stroke>
        </IconButton>
      </SideHead>
      <SideRow>一个字，就是好。</SideRow>
      <SideRow $muted $top={31}>
        暂无标签
        <IconButton aria-label="添加标签">
          <Plus w={27} stroke={1.6} />
        </IconButton>
      </SideRow>
      <PyRow $top={31}>
        <Stroke w={28} h={18} box="0 0 28 18" color={muted} stroke={2.2}>
          <path d="M8 3L2 9l6 6M20 3l6 6-6 6M17 1l-6 16" />
        </Stroke>
        <TealLink href="#">
          <Latin>Python</Latin>
        </TealLink>
      </PyRow>
    </SideBlock>
    <SideBlock $gap={62}>
      <SideHead>
        <h2>发行版</h2>
      </SideHead>
      <SideRow $muted>
        <span>暂无发行版，&nbsp;</span>
        <TealLink href="#">创建</TealLink>
      </SideRow>
    </SideBlock>
    <SideBlock $gap={60}>
      <SideHead>
        <h2>
          贡献者 <small>(1)</small>
        </h2>
        <a href="#">全部</a>
      </SideHead>
      <SideRow $top={31}>
        <Avatar $size={64} $bg="#27ae60" $font={32}>G</Avatar>
      </SideRow>
    </SideBlock>
    <SideBlock $gap={79}>
      <SideHead>
        <h2>近期动态</h2>
      </SideHead>
      <Feed>
        <FeedItem>
          <Avatar $size={48} $bg="#3498db" $font={24}>小</Avatar>
          <span>
            1分钟前推送了新的 <TealLink href="#"><TabLatin>master</TabLatin></TealLink> 分支
          </span>
        </FeedItem>
        <FeedItem>
          <Avatar $size={48} $bg="#3498db" $font={24}>小</Avatar>
          <span>1小时前创建了仓库</span>
        </FeedItem>
      </Feed>
    </SideBlock>
  </Side>
);

/* ---------- gitee: floating tools ---------- */

const FloatStack = styled.div`
  position: absolute;
  right: 41px;
  bottom: 345px;
  display: grid;
  gap: 12px;
`;

const FloatButton = styled.button<{ $main?: boolean }>`
  width: 80px;
  height: 80px;
  border-radius: 50%;
  background: ${(p) => (p.$main ? "#25b131" : "#fff")};
  color: ${(p) => (p.$main ? "#fff" : muted)};
  box-shadow: 0 2px 2px rgba(0, 0, 0, 0.08), 0 0 36px rgba(0, 0, 0, 0.1);
  display: flex;
  align-items: center;
  justify-content: center;
  font-size: 38px;
  font-weight: 600;
`;

const FloatBox = styled.button`
  position: absolute;
  right: 0;
  bottom: 200px;
  width: 97px;
  height: 96px;
  border-radius: 12px 0 0 12px;
  background: #fff;
  box-shadow: 0 4px 24px rgba(0, 0, 0, 0.16);
  display: flex;
  align-items: center;
  justify-content: center;
`;

const Floating = () => (
  <>
    <FloatStack>
      <FloatButton $main>?</FloatButton>
      <FloatButton aria-label="写评论">
        <Stroke w={32} box="0 0 32 32" stroke={2.4}>
          <path d="M15 3H2v27h28V16M31 2L19 14M8 17h8M8 24h16" />
        </Stroke>
      </FloatButton>
      <FloatButton aria-label="消息">
        <Stroke w={34} h={30} box="0 0 34 30" stroke={2.4}>
          <path d="M2 2h30v22H21l-4 4-4-4H2z" />
          <path d="M8 13h3M15.500 13h3M23 13h3" strokeWidth="3.600" />
        </Stroke>
      </FloatButton>
    </FloatStack>
    <FloatBox aria-label="助手">
      <SwirlMark size={48} id="swirlFloat" />
    </FloatBox>
  </>
);

/* ---------- windows task bar ---------- */

const Taskbar = styled.footer`
  height: 95px;
  flex: none;
  display: grid;
  grid-template-columns: 1fr auto 1fr;
  align-items: center;
  border-top: 2px solid #4a4a4c;
  background: linear-gradient(90deg, #2a2328 0, #33232a 5%, #24272a 11%, #222327 30%, #202428 45%, #28242b 60%, #28252c 100%);
  color: #fff;
`;

const Weather = styled.button`
  position: relative;
  display: flex;
  align-items: center;
  gap: 15px;
  padding-left: 38px;
  color: #fff;
  text-align: left;
  font-size: 22px;
  line-height: 32px;

  span span { display: block; color: #c8c6c8; font-size: 24px; }
`;

const WeatherCount = styled.b`
  position: absolute;
  left: 60px;
  top: -2px;
  width: 32px;
  border-radius: 50%;
  background: #ff99a4;
  color: #111;
  font-size: 22px;
  font-weight: 400;
  line-height: 32px;
  text-align: center;
`;

const Dock = styled.div`
  display: flex;
  align-items: center;
  padding-right: 22px;
`;

const DockSlot = styled.button<{ $active?: boolean; $mark?: string }>`
  position: relative;
  width: 80px;
  height: 80px;
  margin: 0 4px;
  border-radius: 10px;
  display: flex;
  align-items: center;
  justify-content: center;
  ${(p) =>
    p.$active &&
    css`
      background: #37343b;
      box-shadow: inset 0 0 0 2px #403e44;
    `}
  ${(p) =>
    p.$mark &&
    css`
      &::after {
        content: "";
        position: absolute;
        bottom: 2px;
        width: ${p.$active ? 32 : 12}px;
        height: 6px;
        border-radius: 3px;
        background: ${p.$mark};
      }
    `}
`;

const DockSearch = styled.label`
  width: 440px;
  height: 64px;
  margin: 0 4px 0 6px;
  padding: 0 8px 0 22px;
  display: flex;
  align-items: center;
  gap: 20px;
  border: 2px solid #5b5d60;
  border-radius: 32px;
  background: #424346;
`;

const DockInput = styled.input`
  flex: 1;
  min-width: 0;

  &::placeholder { color: #cfcfd0; opacity: 1; }
`;

const Tray = styled.div`
  justify-self: end;
  display: flex;
  align-items: center;
  padding-right: 42px;
  font-size: 28px;
`;

const TrayGroup = styled.div<{ $gap: number; $after: number }>`
  display: flex;
  align-items: center;
  gap: ${(p) => p.$gap}px;
  margin-right: ${(p) => p.$after}px;
`;

const Clock = styled.time`
  margin-right: 17px;
  font-size: 23px;
  line-height: 32px;
  text-align: right;

  span { display: block; }
`;

const PreTag = styled.span`
  position: absolute;
  right: 16px;
  bottom: 15px;
  padding: 0 4px;
  border-radius: 4px;
  background: #ffc917;
  color: #222;
  font-size: 14px;
  font-weight: 700;
  line-height: 15px;
`;

const KDisc = styled.span`
  width: 40px;
  border: 3px solid #fff;
  border-radius: 50%;
  font-size: 24px;
  font-style: italic;
  font-weight: 800;
  line-height: 34px;
  text-align: center;
`;

const PcTile = styled.span`
  position: absolute;
  left: 24px;
  top: 24px;
  width: 31px;
  height: 31px;
  background: #000;
  color: #fff;
  font-size: 16px;
  font-weight: 700;
  line-height: 19px;
  text-align: center;

  &::after {
    content: "";
    display: block;
    width: 11px;
    height: 2px;
    margin: 5px 4px;
    background: #fff;
  }
`;

const WindowsBar = () => (
  <Taskbar>
    <Weather>
      <Drawing $w={48} viewBox="0 0 48 48" aria-hidden="true">
        <defs>
          <linearGradient id="haze" x1="0" y1="0" x2=".5" y2="1">
            <stop offset="0" stopColor="#ffc400" />
            <stop offset="1" stopColor="#e15a00" />
          </linearGradient>
        </defs>
        <circle cx="24" cy="26" r="20" fill="url(#haze)" />
        <path d="M10 14h8M10 22h36M2 30h22M32 30h6M2 38h36" stroke="#f3dcae" strokeWidth="4" strokeLinecap="round" />
      </Drawing>
      <WeatherCount>1</WeatherCount>
      <span>
        13°C
        <span>雾霾</span>
      </span>
    </Weather>
    <Dock>
      <DockSlot aria-label="开始">
        <Drawing $w={48} viewBox="0 0 48 48" aria-hidden="true">
          <defs>
            <linearGradient id="win" gradientUnits="userSpaceOnUse" x1="0" y1="0" x2="48" y2="48">
              <stop offset="0" stopColor="#7df3ff" />
              <stop offset="1" stopColor="#0a95ff" />
            </linearGradient>
          </defs>
          <path d="M1 1h22v22H1zM25 1h22v22H25zM1 25h22v22H1zM25 25h22v22H25z" fill="url(#win)" />
        </Drawing>
      </DockSlot>
      <DockSearch>
        <Magnifier w={30} color="#fff" stroke={2.6} />
        <DockInput placeholder="搜索" aria-label="搜索" />
        <Drawing $w={96} $h={52} viewBox="0 0 96 52" fill="none" aria-hidden="true">
          <path d="M60 51c3-12 14-24 26-46M74 28l10-4" stroke="#a8705f" strokeWidth="4" />
          <path d="M38 18c-8 4-10 12-16 14l2 6 14-4c2 8 4 12 12 14l14-2c8-6 4-20-4-26z" fill="#e4e4f0" />
          <path d="M38 18c-8 4-10 12-16 14l2 6 18-8zM56 20c10 6 14 22 8 28l-12-2c6-6 8-18 4-26zM38 34l10 2 4 14H36z" fill="#6b78c4" />
          <circle cx="48" cy="13" r="10.500" fill="#f3f1f6" />
          <circle cx="39" cy="6" r="3.600" fill="#4356a3" />
          <circle cx="58" cy="5" r="3.600" fill="#4356a3" />
          <ellipse cx="44" cy="13" rx="2.400" ry="3" fill="#4a5798" />
          <ellipse cx="52" cy="13" rx="2.400" ry="3" fill="#4a5798" />
          <circle cx="48" cy="18" r="1.400" fill="#303a70" />
          <path d="M6 51c12-2 22-4 26-16L14 14 6 8M24 2l2 18 8 16 8 14H26" stroke="#b07864" strokeWidth="5" />
          <path d="M2 20l10-4-4-6zM4 30l8 10-6 2zM86 4l6 8-8 2zM92 22l-12 4 8 6zM14 34l2 12-6-4zM80 40l8-2-6-4z" fill="#8ea25a" />
        </Drawing>
      </DockSearch>
      <DockSlot aria-label="Copilot">
        <Drawing $w={48} viewBox="0 0 48 48" aria-hidden="true">
          <defs>
            <linearGradient id="copA" x1="0" y1="0" x2="0" y2="1">
              <stop offset="0" stopColor="#1f9df0" />
              <stop offset=".55" stopColor="#5bbd5a" />
              <stop offset="1" stopColor="#f3c814" />
            </linearGradient>
            <linearGradient id="copB" x1="1" y1="0" x2="0" y2="1">
              <stop offset="0" stopColor="#a55cf0" />
              <stop offset="1" stopColor="#f5656f" />
            </linearGradient>
          </defs>
          <path d="M12 2h16c5 0 7 4 8 9H26c-3 0-5 2-6 5l-5 17c-1 3-3 5-6 4-6 0-9-3-8-9l5-19c1-4 3-7 6-7z" fill="url(#copA)" />
          <path d="M36 13h4c5 0 8 4 7 9l-4 13c-1 3-3 4-6 4H20c4 0 6-3 7-6l4-15c1-3 2-5 5-5z" fill="url(#copB)" />
          <path d="M22 2h6c5 0 7 4 8 10h-8z" fill="#1c4fc4" />
        </Drawing>
        <PreTag>PRE</PreTag>
      </DockSlot>
      <DockSlot aria-label="任务视图">
        <Drawing $w={48} viewBox="0 0 48 48" aria-hidden="true">
          <rect x="12" y="2" width="36" height="32" rx="2" fill="#f4f4f4" />
          <rect x="0" y="14" width="36" height="32" rx="2" fill="#777" opacity=".85" />
        </Drawing>
      </DockSlot>
      <DockSlot aria-label="文件资源管理器">
        <Drawing $w={48} viewBox="0 0 48 48" aria-hidden="true">
          <path d="M0 4a2 2 0 0 1 2-2h14l5 5h25v12H0z" fill="#dd9b0b" />
          <path d="M0 10h17l4-3h25a2 2 0 0 1 2 2v33a3 3 0 0 1-3 3H3a3 3 0 0 1-3-3z" fill="#ffcc45" />
          <path d="M9 45V36a5 5 0 0 1 5-5h21a5 5 0 0 1 5 5v9z" fill="#0f6cbf" />
          <path d="M15 38h19" stroke="#0a4b8c" strokeWidth="2.500" />
        </Drawing>
      </DockSlot>
      <DockSlot aria-label="Edge">
        <Drawing $w={48} viewBox="0 0 48 48" aria-hidden="true">
          <defs>
            <linearGradient id="edgeA" x1="0" y1="0" x2="1" y2="0">
              <stop offset="0" stopColor="#1b9de2" />
              <stop offset="1" stopColor="#5fdc5a" />
            </linearGradient>
          </defs>
          <circle cx="24" cy="24" r="24" fill="#0d72cf" />
          <path d="M1 19C4 8 13 0 25 0c13 0 23 9 23 20 0 8-6 13-13 13-5 0-8-2-7-4 3-3 3-8 0-11-6-7-20-6-27 1z" fill="url(#edgeA)" />
          <path d="M18 22c-4 8 0 18 10 20 7 1 12-2 17-6-4 8-12 12-21 12-9-2-15-12-12-20 1-3 3-5 6-6z" fill="#114a8b" />
          <path d="M29 30c0 3 5 5 11 3l8-3v4l-4 3c-8 5-20 3-20-5 0-5 5-6 5-2z" fill="#23252a" />
        </Drawing>
      </DockSlot>
      <DockSlot aria-label="应用商店">
        <Drawing $w={48} viewBox="0 0 48 48" aria-hidden="true">
          <path d="M12 10V3a2 2 0 0 1 2-2h20a2 2 0 0 1 2 2v7" fill="none" stroke="#1fa7f0" strokeWidth="4" />
          <path d="M1 7h46v34a7 7 0 0 1-7 7H8a7 7 0 0 1-7-7z" fill="#efefef" />
          <path d="M12 4v8M36 4v8" stroke="#1fa7f0" strokeWidth="4" />
          <path d="M14 17h9v9h-9z" fill="#f25022" />
          <path d="M25 17h9v9h-9z" fill="#7fba00" />
          <path d="M14 28h9v9h-9z" fill="#00a4ef" />
          <path d="M25 28h9v9h-9z" fill="#ffb900" />
        </Drawing>
      </DockSlot>
      <DockSlot aria-label="应用">
        <Drawing $w={48} viewBox="0 0 48 48" aria-hidden="true">
          <path d="M14 22C18 4 21 1 25 1s7 5 12 22z" fill="#ff6b81" />
          <path d="M4 36c5-14 12-19 20-19 12 0 20 10 22 18-4 4-14 4-22 0z" fill="#12a8ff" />
          <path d="M22 34c4-10 10-13 15-10 8 5 12 18 8 21-8 4-13-8-23-11z" fill="#10e3a5" />
          <path d="M1 41c1-5 6-9 12-9 6 1 6 4 3 8-3 7-8 7-11 6s-4-3-4-5z" fill="#ffd400" />
        </Drawing>
      </DockSlot>
      <DockSlot aria-label="MasterGo">
        <Drawing $w={44} $h={38} viewBox="0 0 44 38" aria-hidden="true">
          <path d="M0 5c0-5 5-6 8-2l12 16L6 37H3a3 3 0 0 1-3-3z" fill="#3ab0fb" />
          <path d="M44 5c0-5-5-6-8-2L5 37h36a3 3 0 0 0 3-3z" fill="#1763e8" />
          <path d="M5 37l17-19 9 19z" fill="#2c9cf5" />
        </Drawing>
      </DockSlot>
      <DockSlot $active $mark="#4cc2ff" aria-label="360浏览器">
        <Drawing $w={48} viewBox="0 0 48 48" fill="none" aria-hidden="true">
          <circle cx="24" cy="24" r="22" fill="#fff" />
          <circle cx="24" cy="24" r="19" fill="#55b512" />
          <path d="M14 26h20c0-7-4-11-10-11s-10 4-10 10 4 10 10 10c5 0 8-2 9-5" stroke="#fff" strokeWidth="5" />
          <path d="M6 46C2 30 22 2 44 2" stroke="#63c718" strokeWidth="3.400" />
        </Drawing>
      </DockSlot>
      <DockSlot aria-label="酷狗音乐">
        <TileIcon $bg="#1e82ff" $size={48}>
          <KDisc>K</KDisc>
        </TileIcon>
      </DockSlot>
      <DockSlot $mark="#9a989c" aria-label="PyCharm">
        <Drawing $w={48} viewBox="0 0 48 48" aria-hidden="true">
          <path d="M3 7L20 0l8 14-14 34L1 40z" fill="#21d789" />
          <path d="M26 8l10-8 4 16 8 6-4 14 4 8-18 4-14-4z" fill="#e8f552" />
          <path d="M36 14l12 6-6 10z" fill="#0ad4f0" />
        </Drawing>
        <PcTile>PC</PcTile>
      </DockSlot>
    </Dock>
    <Tray>
      <TrayGroup $gap={34} $after={33}>
        <Stroke w={22} h={14} box="0 0 22 14" color="#fff" stroke={2.4}>
          <path d="M1 12L11 2l10 10" />
        </Stroke>
        <Drawing $w={32} viewBox="0 0 32 32" aria-hidden="true">
          <circle cx="16" cy="16" r="16" fill="#4254f5" />
          <path d="M7 8h18v14H7zM11 26l3-4h4l3 4" fill="#fff" />
          <circle cx="12.500" cy="15" r="2.500" fill="none" stroke="#4254f5" strokeWidth="2" />
          <path d="M18 13h5M18 17h3" stroke="#4254f5" strokeWidth="2" />
        </Drawing>
        <Drawing $w={32} $h={22} viewBox="0 0 32 22" aria-hidden="true">
          <path d="M6 8a10 9 0 0 1 19 0z" fill="#9b999d" />
          <path d="M7 22A7 7 0 0 1 5 8c4-2 9-1 12 2l8-2c9 2 9 13 1 14z" fill="#c9c8cb" />
          <path d="M3 20l14-10c6-4 15 0 15 6 0 4-3 6-6 6H7z" fill="#fff" />
        </Drawing>
      </TrayGroup>
      <TrayGroup $gap={48} $after={46}>
        <span>英</span>
        <span>拼</span>
      </TrayGroup>
      <TrayGroup $gap={15} $after={32}>
        <Stroke w={32} h={24} box="0 0 32 24" color="#fff" stroke={2.4}>
          <path d="M1 9a21 21 0 0 1 30 0M6 14a14 14 0 0 1 20 0M11 18a7 7 0 0 1 10 0" />
          <circle cx="16" cy="21" r="1.600" fill="#fff" />
        </Stroke>
        <Stroke w={33} h={26} box="0 0 33 26" color="#fff">
          <path d="M2 9h5l7-7v22l-7-7H2zM18 9a6 6 0 0 1 0 8" />
          <path d="M22 5a11 11 0 0 1 0 16M27 1a17 17 0 0 1 0 24" stroke="#77757a" />
        </Stroke>
        <Stroke w={33} h={28} box="0 0 33 28" color="#fff">
          <rect x="3" y="8" width="25" height="18" rx="4" />
          <rect x="6" y="11" width="19" height="12" rx="1" fill="#fff" stroke="none" />
          <path d="M29 13v7h3v-7z" fill="#fff" />
          <path d="M9 0L1 11h5L3 21l11-13H9z" fill="#fff" stroke="#28252c" strokeWidth="2" />
        </Stroke>
      </TrayGroup>
      <Clock>
        <span>11:50</span>
        <span>2024/3/16</span>
      </Clock>
      <Fill w={27} h={30} box="0 0 27 30" color="#99ebff">
        <path d="M13.500 0a10 10 0 0 1 10 10v7l3.500 7H0l3.500-7v-7a10 10 0 0 1 10-10zM9 26h9a4.500 4 0 0 1-9 0z" />
      </Fill>
    </Tray>
  </Taskbar>
);

export default function App() {
  return (
    <Shell>
      <Global />
      <BrowserTabs />
      <AddressBar />
      <Bookmarks />
      <Body>
        <SideRail />
        <Page>
          <Header />
          <Repo />
          <Columns>
            <MainColumn />
            <SideColumn />
          </Columns>
          <Floating />
        </Page>
        <ScrollBar />
      </Body>
      <WindowsBar />
    </Shell>
  );
}
